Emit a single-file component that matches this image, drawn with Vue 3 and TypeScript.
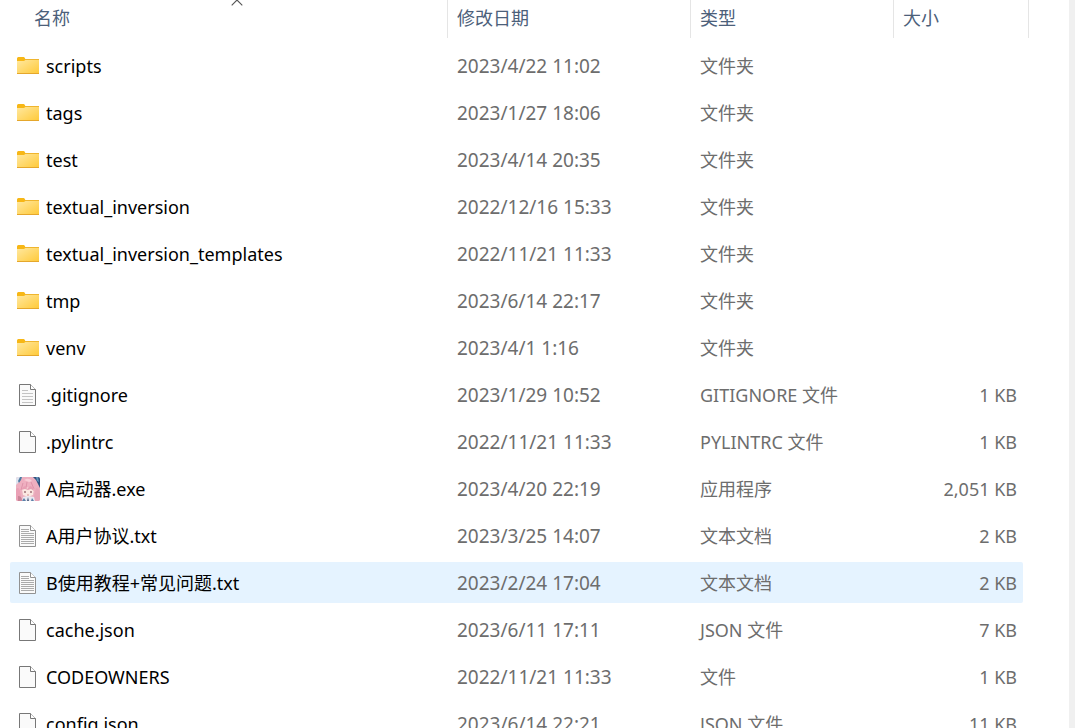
<script setup lang="ts">
import { ref } from 'vue'

type Icon = 'folder' | 'lines' | 'blank' | 'text' | 'app'

interface Entry {
  icon: Icon
  name: string
  date: string
  type: string
  size: string
}

interface Run {
  text: string
  han: boolean
}

const columns = ['名称', '修改日期', '类型', '大小']

const entries: Entry[] = [
  { icon: 'folder', name: 'scripts', date: '2023/4/22 11:02', type: '文件夹', size: '' },
  { icon: 'folder', name: 'tags', date: '2023/1/27 18:06', type: '文件夹', size: '' },
  { icon: 'folder', name: 'test', date: '2023/4/14 20:35', type: '文件夹', size: '' },
  { icon: 'folder', name: 'textual_inversion', date: '2022/12/16 15:33', type: '文件夹', size: '' },
  { icon: 'folder', name: 'textual_inversion_templates', date: '2022/11/21 11:33', type: '文件夹', size: '' },
  { icon: 'folder', name: 'tmp', date: '2023/6/14 22:17', type: '文件夹', size: '' },
  { icon: 'folder', name: 'venv', date: '2023/4/1 1:16', type: '文件夹', size: '' },
  { icon: 'lines', name: '.gitignore', date: '2023/1/29 10:52', type: 'GITIGNORE 文件', size: '1 KB' },
  { icon: 'blank', name: '.pylintrc', date: '2022/11/21 11:33', type: 'PYLINTRC 文件', size: '1 KB' },
  { icon: 'app', name: 'A启动器.exe', date: '2023/4/20 22:19', type: '应用程序', size: '2,051 KB' },
  { icon: 'text', name: 'A用户协议.txt', date: '2023/3/25 14:07', type: '文本文档', size: '2 KB' },
  { icon: 'text', name: 'B使用教程+常见问题.txt', date: '2023/2/24 17:04', type: '文本文档', size: '2 KB' },
  { icon: 'blank', name: 'cache.json', date: '2023/6/11 17:11', type: 'JSON 文件', size: '7 KB' },
  { icon: 'blank', name: 'CODEOWNERS', date: '2022/11/21 11:33', type: '文件', size: '1 KB' },
  { icon: 'blank', name: 'config.json', date: '2023/6/14 22:21', type: 'JSON 文件', size: '11 KB' },
]

const selected = ref('B使用教程+常见问题.txt')

// Splits a label into Han and Latin runs so each script gets its own face.
function runs(label: string): Run[] {
  const parts = label.match(/[\u4e00-\u9fff]+|[^\u4e00-\u9fff]+/g) ?? []
  return parts.map((text) => ({ text, han: /[\u4e00-\u9fff]/.test(text) }))
}
</script>

<template>
  <main class="pane">
    <table class="files">
      <thead>
        <tr>
          <th v-for="(column, i) in columns" :key="column" scope="col" :class="'col-' + i">
            <button type="button" class="heading">
              {{ column }}
              <svg v-if="i === 0" class="sort" width="12" height="6" viewBox="0 0 12 6" aria-hidden="true">
                <path d="M.7 5.300 6 0l5.300 5.300" fill="none" stroke="#555" stroke-width="1.1" />
              </svg>
            </button>
          </th>
        </tr>
      </thead>
      <tbody>
        <tr
          v-for="entry in entries"
          :key="entry.name"
          :class="{ selected: entry.name === selected }"
          @click="selected = entry.name"
        >
          <td class="name">
            <div class="label">
              <svg class="icon" width="24" height="24" viewBox="0 0 24 24" aria-hidden="true">
                <defs>
                  <linearGradient id="folder-front" x1="0" y1="0" x2="1" y2="1">
                    <stop offset="0" stop-color="#ffe8a0" />
                    <stop offset="1" stop-color="#ffc937" />
                  </linearGradient>
                  <clipPath id="portrait"><rect width="24" height="24" rx="2" /></clipPath>
                  <filter id="soften"><feGaussianBlur stdDeviation="0.7" /></filter>
                </defs>
                <g v-if="entry.icon === 'folder'">
                  <path d="M1 4.6Q1 3 2.4 3h5.2q.7 0 1.1.8L9.3 5H23v2H1z" fill="#f7b716" />
                  <path d="M1 7h7l1.400-1H23v14H1z" fill="url(#folder-front)" />
                  <path d="M9.200 5.500H23" stroke="#efb52e" />
                  <path d="M1 19.500h22" stroke="#e5a72c" />
                </g>
                <g v-else-if="entry.icon === 'app'" clip-path="url(#portrait)">
                  <rect width="24" height="24" fill="#ecb0c0" />
                  <g filter="url(#soften)">
                    <path d="M0 0h6L3 5 0 8z" fill="#dfe3ee" />
                    <path d="M2 4 4 0h2L5 3 3 6z" fill="#4f7ba2" />
                    <path d="M17 0h7v11l-2-4-2-4z" fill="#2d527f" />
                    <path d="M20 0h2l1 5-2-1z" fill="#5f93b8" />
                    <path d="M4 5Q11-2 19 4l3 7-3 2H4L2 9z" fill="#efafc0" />
                    <path d="M8 3q5-3 8 1l-3 1z" fill="#f8cfd8" />
                    <path d="M7 6 5 13M15 5l3 7M11 5l-1 6" stroke="#de93aa" fill="none" />
                    <path d="M6 12q6-3 12 0l-1 6-5 2-5-2z" fill="#fbe8e2" />
                    <path d="M5 13q2-4 5-4l1 3 3-3q4 1 4 5l-3-2-3 1-3-1z" fill="#e89fb4" />
                    <path d="M8 15h2M14 15h2" stroke="#a0727a" stroke-width="1.300" />
                    <path d="M11 18h2" stroke="#d79292" />
                    <path d="M0 12q3-3 4 2l1 6-2 4H0z" fill="#eaa0b5" />
                    <path d="M20 11q4 1 4 6v7h-5l-1-5z" fill="#e8a6b8" />
                    <path d="M2 19q4 0 4 5H2z" fill="#c98598" />
                    <path d="m7 20 5-1 6 1 1 4H6z" fill="#e9e9f1" />
                    <path d="m8 21 2 3H6zM16 21l2 3h-3z" fill="#5a80a8" />
                    <path d="m12 20 1 4h-2z" fill="#4b5f80" />
                  </g>
                </g>
                <g v-else>
                  <path
                    d="M3.500 1.500h11l5 5v16h-16z"
                    fill="#fafafa"
                    :stroke="entry.icon === 'text' ? '#929292' : '#777'"
                  />
                  <path
                    d="M14.500 1.500v5h5"
                    fill="#fff"
                    :stroke="entry.icon === 'text' ? '#929292' : '#777'"
                  />
                  <path
                    v-if="entry.icon === 'lines'"
                    d="M6 7.500h6M6 10.500h11M6 13.500h11M6 16.500h11M6 19.500h11"
                    stroke="#c4c4c4"
                  />
                  <path
                    v-if="entry.icon === 'text'"
                    d="M5 5.500h8M5 7.500h8M5 9.500h13M5 11.500h13M5 13.500h13M5 15.500h13M5 17.500h13M5 19.500h13"
                    stroke="#ababab"
                  />
                </g>
              </svg>
              <span class="text"><span v-for="(run, r) in runs(entry.name)" :key="r" :class="{ han: run.han }">{{ run.text }}</span></span>
            </div>
          </td>
          <td class="date">{{ entry.date }}</td>
          <td><span v-for="(run, r) in runs(entry.type)" :key="r" :class="{ han: run.han }">{{ run.text }}</span></td>
          <td class="size">{{ entry.size }}</td>
        </tr>
      </tbody>
    </table>
  </main>
</template>

<style>
body {
  margin: 0;
  background: #fff;
}
</style>

<style scoped>
.pane {
  box-sizing: border-box;
  height: 100vh;
  overflow: hidden;
  padding: 0 46px 0 10px;
  border-right: 6px solid #f0f0f0;
  font-family: "Noto Sans", "Noto Sans CJK SC", sans-serif;
  font-size: 18px;
  line-height: 24px;
  color: #6d6d6d;
}

.files {
  width: 100%;
  margin-top: -6px;
  table-layout: fixed;
  border-collapse: separate;
  border-spacing: 0 6px;
}

th {
  position: relative;
  height: 39px;
  padding: 0;
  font-weight: 400;
}

th::after {
  content: "";
  position: absolute;
  top: 0;
  right: 0;
  width: 1px;
  height: 38px;
  background: #e5e5e5;
}

.col-0 {
  padding-left: 15px;
}

.col-1 {
  width: 243px;
}

.col-2 {
  width: 203px;
}

.col-3 {
  width: 129px;
}

.col-3::after {
  right: -6px;
}

.heading {
  position: relative;
  display: block;
  width: 100%;
  height: 39px;
  padding: 0 9px 5px;
  border: 0;
  background: none;
  font-family: "Noto Sans CJK SC", sans-serif;
  font-size: 18px;
  line-height: 24px;
  text-align: left;
  color: #4c607a;
}

.sort {
  position: absolute;
  top: 0;
  left: 50%;
  margin-left: -6px;
}

td {
  height: 41px;
  padding: 0 0 0 9px;
  white-space: nowrap;
}

td.name {
  padding-left: 6px;
  border-radius: 2px 0 0 2px;
  color: #000;
}

.label {
  display: flex;
  align-items: center;
  gap: 6px;
}

.icon {
  flex: none;
}

.han {
  font-family: "Noto Sans CJK SC", sans-serif;
  line-height: 20px;
}

td.date {
  font-size: 19px;
}

td.size {
  padding: 0 6px 0 0;
  border-radius: 0 2px 2px 0;
  text-align: right;
}

.selected td {
  background: #e5f3ff;
}
</style>
